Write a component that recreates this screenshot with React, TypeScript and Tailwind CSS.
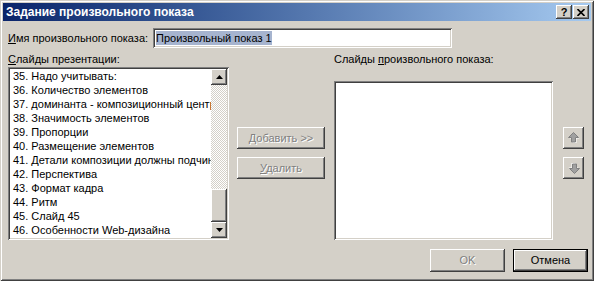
const bevel =
  "shadow-[inset_-1px_-1px_#404040,inset_1px_1px_#ffffff,inset_-2px_-2px_#808080,inset_2px_2px_#d4d0c8]";
const sunken =
  "shadow-[inset_1px_1px_#808080,inset_-1px_-1px_#ffffff,inset_2px_2px_#404040,inset_-2px_-2px_#d4d0c8]";
const disabledText = "text-[#808080] [text-shadow:1px_1px_0_#ffffff]";

const slides = [
  "35. Надо учитывать:",
  "36. Количество элементов",
  "37. доминанта - композиционный центр",
  "38. Значимость элементов",
  "39. Пропорции",
  "40. Размещение элементов",
  "41. Детали композиции должны подчиняться главному",
  "42. Перспектива",
  "43. Формат кадра",
  "44. Ритм",
  "45. Слайд 45",
  "46. Особенности Web-дизайна",
];

function ScrollArrow({ down }: { down?: boolean }) {
  return (
    <div className={`flex h-[16px] w-[16px] items-center justify-center bg-[#d4d0c8] ${bevel}`}>
      <svg width="7" height="4" viewBox="0 0 7 4" className={down ? "" : "rotate-180"}>
        <polygon points="0,0 7,0 3.5,4" fill="#000" />
      </svg>
    </div>
  );
}

function MoveArrow({ down }: { down?: boolean }) {
  const pts = "5.5,0.5 10.5,5.5 7.5,5.5 7.5,10 3.5,10 3.5,5.5 0.5,5.5";
  return (
    <div className={`flex h-[22px] w-[21px] items-center justify-center bg-[#d4d0c8] ${bevel}`}>
      <svg width="12" height="12" viewBox="0 0 12 12" className={down ? "rotate-180" : ""}>
        <polygon points={pts} fill="#ffffff" transform="translate(1,1)" />
        <polygon points={pts} fill="#a0a0a0" stroke="#808080" strokeWidth="1" />
      </svg>
    </div>
  );
}

export default function App() {
  return (
    <div className="h-[281px] w-[594px] overflow-hidden bg-[#d4d0c8] font-['Liberation_Sans',Arial,sans-serif] text-[11px] text-black">
      <div className="flex h-full w-full flex-col p-[3px] shadow-[inset_1px_1px_#d4d0c8,inset_-1px_-1px_#404040,inset_2px_2px_#ffffff,inset_-2px_-2px_#808080]">
        {/* title bar */}
        <div className="flex h-[18px] shrink-0 items-center justify-between bg-gradient-to-r from-[#0a246a] to-[#a6caf0] pl-[3px] pr-[2px]">
          <span className="text-[12px] font-bold leading-none text-white">
            Задание произвольного показа
          </span>
          <div className="flex">
            <div className={`flex h-[14px] w-[16px] items-center justify-center bg-[#d4d0c8] ${bevel}`}>
              <span className="text-[11px] font-bold leading-none">?</span>
            </div>
            <div className={`ml-[1px] flex h-[14px] w-[16px] items-center justify-center bg-[#d4d0c8] ${bevel}`}>
              <svg width="8" height="7" viewBox="0 0 8 7">
                <path d="M0.5 0 L7.5 7 M7.5 0 L0.5 7" stroke="#000" strokeWidth="1.6" />
              </svg>
            </div>
          </div>
        </div>

        <div className="flex flex-col pl-[5px]">
          {/* name row */}
          <div className="mt-[7px] flex h-[20px] items-center">
            <span className="w-[145px]">
              <u>И</u>мя произвольного показа:
            </span>
            <div className={`flex h-[20px] w-[299px] items-center bg-white px-[3px] ${sunken}`}>
              <span className="bg-[#a6b4cf] leading-[14px]">Произвольный показ 1</span>
            </div>
          </div>

          {/* lists row */}
          <div className="mt-[4px] flex">
            <div className="flex w-[221px] flex-col">
              <span className="h-[15px] leading-[15px]">
                <u>С</u>лайды презентации:
              </span>
              <div className={`flex h-[173px] bg-white p-[2px] ${sunken}`}>
                <div className="flex min-w-0 flex-1 flex-col">
                  {slides.map((s) => (
                    <div key={s} className="h-[14px] overflow-hidden whitespace-nowrap pl-[3px] leading-[14px]">
                      {s}
                    </div>
                  ))}
                </div>
                <div className="flex w-[16px] flex-col">
                  <ScrollArrow />
                  <div className="flex-1 bg-[repeating-conic-gradient(#ffffff_0_25%,#d4d0c8_0_50%)] bg-[length:2px_2px]" />
                  <div className={`h-[33px] bg-[#d4d0c8] ${bevel}`} />
                  <ScrollArrow down />
                </div>
              </div>
            </div>

            <div className="ml-[8px] flex w-[88px] flex-col gap-[8px] pt-[75px]">
              <div className={`flex h-[22px] items-center justify-center bg-[#d4d0c8] ${bevel} ${disabledText}`}>
                <span>
                  <u>Д</u>обавить &gt;&gt;
                </span>
              </div>
              <div className={`flex h-[22px] items-center justify-center bg-[#d4d0c8] ${bevel} ${disabledText}`}>
                <span>
                  <u>У</u>далить
                </span>
              </div>
            </div>

            <div className="ml-[9px] flex w-[219px] flex-col">
              <span className="h-[15px] leading-[15px]">
                Слайды <u>п</u>роизвольного показа:
              </span>
              <div className={`mt-[14px] h-[159px] bg-white ${sunken}`} />
            </div>

            <div className="ml-[10px] flex w-[21px] flex-col gap-[8px] pt-[75px]">
              <MoveArrow />
              <MoveArrow down />
            </div>
          </div>

          {/* bottom buttons */}
          <div className="mt-[9px] flex justify-end gap-[8px] pr-[3px]">
            <div className={`flex h-[23px] w-[75px] items-center justify-center bg-[#d4d0c8] ${bevel} ${disabledText}`}>
              OK
            </div>
            <div className="h-[23px] w-[75px] border border-black">
              <div className={`flex h-full w-full items-center justify-center bg-[#d4d0c8] ${bevel}`}>
                Отмена
              </div>
            </div>
          </div>
        </div>
      </div>
    </div>
  );
}
